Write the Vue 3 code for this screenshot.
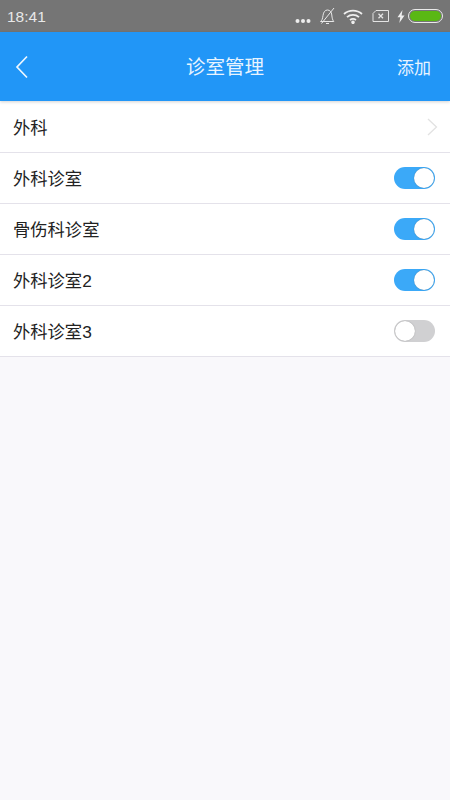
<script setup>
const rows = [
  { label: '外科诊室', on: true },
  { label: '骨伤科诊室', on: true },
  { label: '外科诊室2', on: true },
  { label: '外科诊室3', on: false },
]
</script>

<template>
  <div class="page">
    <div class="status">
      <span class="time">18:41</span>
      <div class="status-icons">
        <svg class="dots" width="16" height="6" viewBox="0 0 16 6"><circle cx="2.500" cy="3" r="2" fill="#eee"/><circle cx="8" cy="3" r="2" fill="#eee"/><circle cx="13.500" cy="3" r="2" fill="#eee"/></svg>
        <svg class="bell" width="17" height="18" viewBox="0 0 17 18" fill="none" stroke="#e8e8e8" stroke-width="1"><path d="M1.500 14.500c1.500-1 2-2.500 2.500-6C4.500 5 6 3 8.500 3s4 2 4.300 5c.3 3 .7 5 2 6.500z"/><path d="M7 16.500h3"/><path d="M2.500 16.500 15 1"/></svg>
        <svg class="wifi" width="20" height="15" viewBox="0 0 20 15" fill="none" stroke="#eee" stroke-width="1.800"><path d="M1 5c5-4.600 13-4.600 18 0"/><path d="M4 8.200c3.400-3 8.600-3 12 0"/><path d="M7 11c1.700-1.300 4.300-1.300 6 0"/><circle cx="10" cy="13.300" r=".9" fill="#eee"/></svg>
        <svg class="sim" width="17" height="14" viewBox="0 0 17 14" fill="none" stroke="#e4e4e4" stroke-width="1"><path d="M4 1.500h12.500v11H1V4.500z"/><path d="M6.500 4.800l4.500 4.500M11 4.800 6.500 9.300" stroke-width="1.300"/></svg>
        <svg class="bolt" width="8" height="13" viewBox="0 0 8 13"><path d="M5.500 0 .5 7.200h2.800L2.300 13l5.200-7.500H4.600z" fill="#eee"/></svg>
        <div class="battery"><div class="charge"></div></div>
      </div>
    </div>

    <header class="nav">
      <svg class="back" width="14" height="24" viewBox="0 0 14 24" fill="none" stroke="#eef7ff" stroke-width="1.700"><path d="M12 1.500 2 12l10 10.500"/></svg>
      <h1 class="title">诊室管理</h1>
      <span class="add">添加</span>
    </header>

    <div class="list">
      <div class="row">
        <span class="label">外科</span>
        <svg class="chevron" width="11" height="18" viewBox="0 0 11 18" fill="none" stroke="#e2e2e2" stroke-width="1.300"><path d="M1 1l8.500 8L1 17"/></svg>
      </div>
      <div v-for="row in rows" :key="row.label" class="row">
        <span class="label">{{ row.label }}</span>
        <div class="switch" :class="{ on: row.on }"><div class="knob"></div></div>
      </div>
    </div>
  </div>
</template>

<style>
html, body { margin: 0; background: #f9f8fb; }
</style>

<style scoped>
.page {
  width: 450px;
  height: 800px;
  overflow: hidden;
  background: #f9f8fb;
  font-family: "Liberation Sans", "Noto Sans CJK SC", sans-serif;
  color: #222;
}
.status {
  height: 32px;
  background: #757575;
  display: flex;
  align-items: center;
  justify-content: space-between;
  box-sizing: border-box;
  padding: 0 7px 0 7px;
  color: #e8e8e8;
}
.time {
  font-size: 15.500px;
  margin-top: 2px;
}
.status-icons {
  display: flex;
  align-items: center;
  gap: 5px;
}
.dots { margin-top: 9px; margin-right: 3px; }
.wifi { margin-left: 2px; }
.sim { margin-left: 4px; }
.bolt { margin-left: 3px; }
.battery {
  width: 35px;
  height: 14px;
  box-sizing: border-box;
  border: 1.500px solid #eaeaea;
  border-radius: 7px;
  padding: 1px;
  margin-left: -2px;
}
.charge {
  height: 100%;
  background: #5ab814;
  border-radius: 5px;
}
.nav {
  height: 69px;
  background: #2196f7;
  display: grid;
  grid-template-columns: 1fr auto 1fr;
  align-items: center;
  box-sizing: border-box;
  padding: 0 19px 0 15px;
  color: #e8f4ff;
  box-shadow: 0 1px 3px rgba(0, 0, 0, 0.18);
  position: relative;
}
.title {
  margin: 0 0 2px 4px;
  font-size: 19.500px;
  font-weight: 400;
}
.add {
  font-size: 17px;
  justify-self: end;
}
.list {
  padding-top: 1px;
  background: #fff;
}
.row {
  height: 51.100px;
  box-sizing: border-box;
  background: #fff;
  border-bottom: 1px solid #e4e2ea;
  display: flex;
  align-items: center;
  justify-content: space-between;
  padding: 0 15px 0 13px;
  font-size: 17.300px;
}
.label { margin-bottom: 2px; }
.chevron { margin-right: -3px; margin-bottom: 1px; }
.switch {
  width: 41px;
  height: 22px;
  border-radius: 11px;
  background: #d0d0d2;
  display: flex;
  align-items: center;
  justify-content: flex-start;
}
.switch.on {
  background: #3ba9f8;
  justify-content: flex-end;
}
.knob {
  width: 20px;
  height: 20px;
  border-radius: 50%;
  background: #fff;
  box-shadow: 0 0 1px rgba(60, 60, 60, 0.5);
  margin: 0 1px;
}
</style>
